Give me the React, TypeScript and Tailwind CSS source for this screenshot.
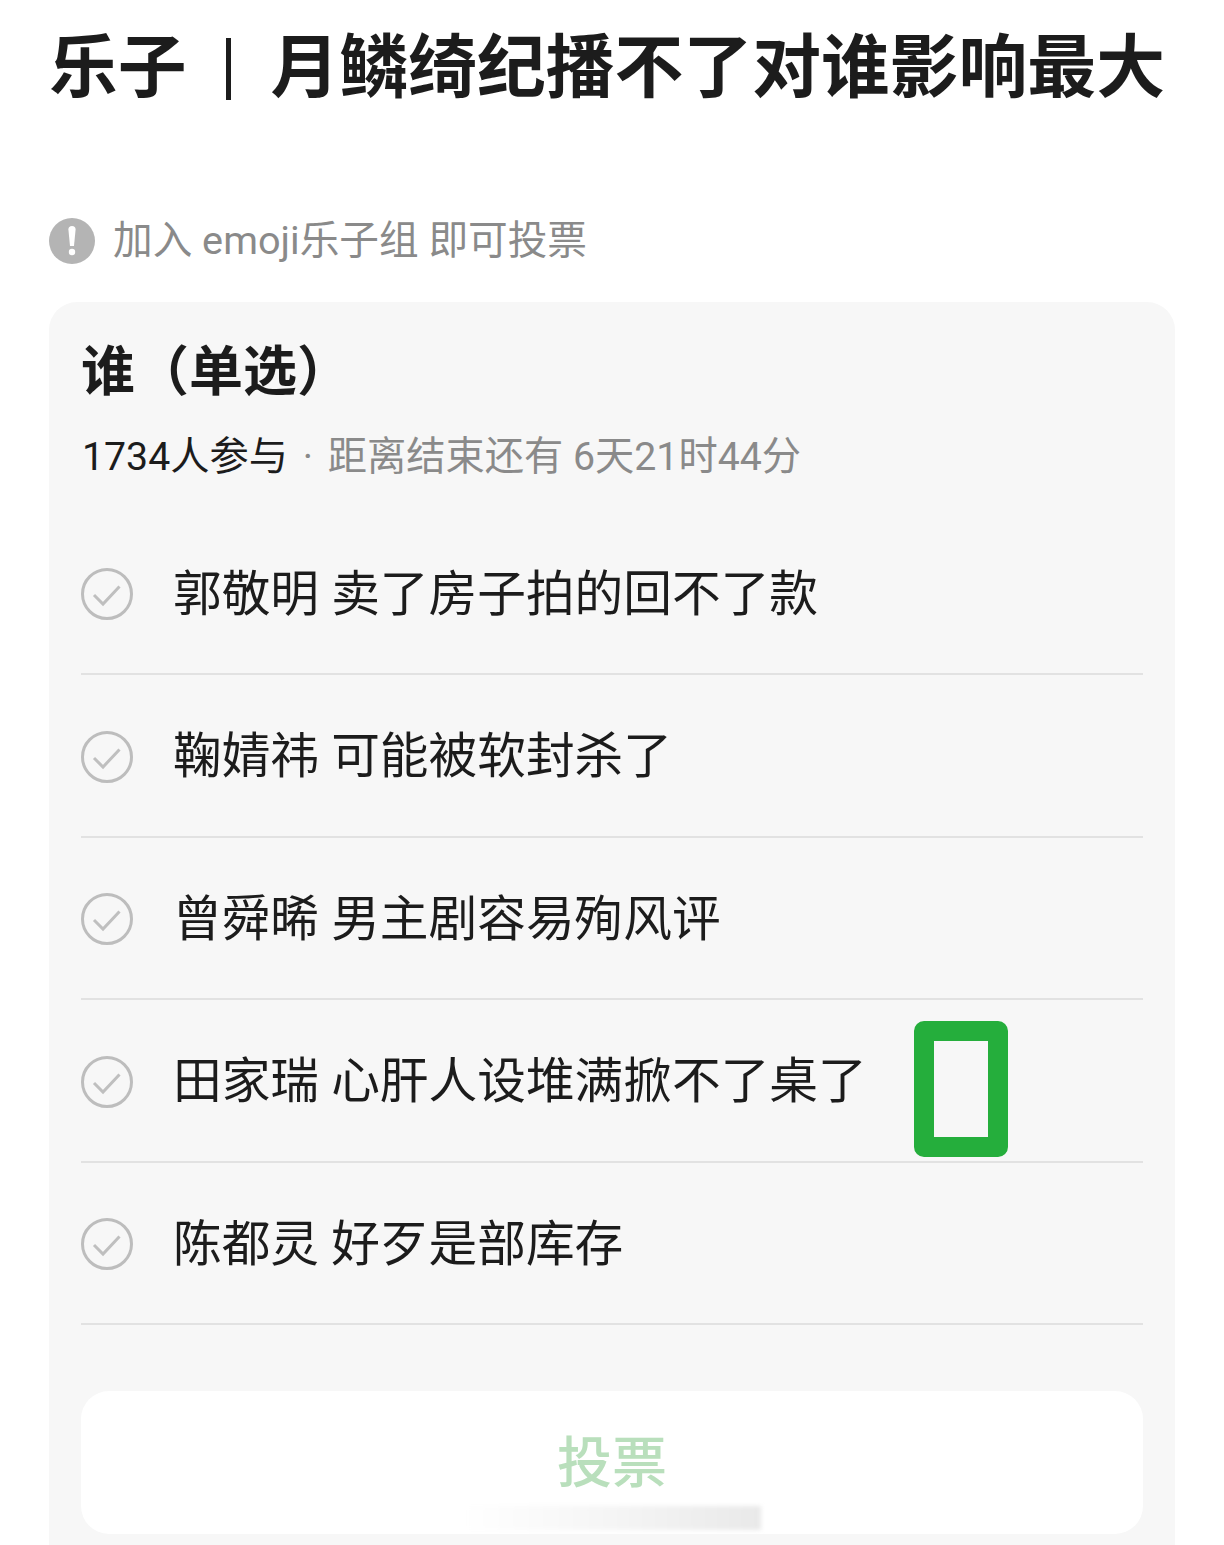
const options = [
  '郭敬明 卖了房子拍的回不了款',
  '鞠婧祎 可能被软封杀了',
  '曾舜晞 男主剧容易殉风评',
  '田家瑞 心肝人设堆满掀不了桌了',
  '陈都灵 好歹是部库存',
]

function CheckCircle() {
  return (
    <svg width="52" height="52" viewBox="0 0 52 52" fill="none" className="shrink-0">
      <circle cx="26" cy="26" r="24.5" stroke="#bdbdbd" strokeWidth="3" />
      <path d="M13 27l9 9 16.5-17.5" stroke="#bfbfbf" strokeWidth="3" />
    </svg>
  )
}

export default function App() {
  return (
    <div className="relative h-[1545px] w-[1224px] overflow-hidden bg-white font-['Roboto','Noto_Sans_CJK_SC',sans-serif]">
      <h1 className="flex h-[134px] items-center pt-[4px] pl-[49px] text-[68.8px] leading-none font-bold whitespace-nowrap text-[#1c1c1c]">
        <span>乐子</span>
        <span className="mr-[40px] ml-[39px] h-[62px] w-[5px] bg-[#1c1c1c]" />
        <span>月鳞绮纪播不了对谁影响最大</span>
      </h1>

      <div className="mt-[82px] flex h-[50px] items-center pl-[49px]">
        <svg width="46" height="46" viewBox="0 0 46 46" className="shrink-0">
          <circle cx="23" cy="23" r="23" fill="#b4b4b4" />
          <path d="M19.4 11.5a3.6 3.6 0 0 1 7.2 0L25 28h-4z" fill="#fff" />
          <circle cx="23" cy="34" r="3.2" fill="#fff" />
        </svg>
        <span className="ml-[18px] text-[39.65px] leading-none text-[#8a8a8a]">加入 emoji乐子组 即可投票</span>
      </div>

      <div className="mx-[49px] mt-[36px] rounded-t-[28px] bg-[#f7f7f7] px-[32px] pt-[38px] pb-[40px]">
        <h2 className="text-[54px] leading-[66px] font-bold text-[#1c1c1c]">谁（单选）</h2>
        <p className="mt-[25px] pl-[1px] text-[39.25px] leading-[52px] whitespace-nowrap text-[#8a8a8a]">
          <span className="text-[#1c1c1c]">1734人参与</span>
          <span className="mx-[5px]"> · </span>距离结束还有 6天21时44分
        </p>

        <ul className="mt-[29.5px]">
          {options.map((o) => (
            <li key={o} className="flex h-[162.5px] items-center gap-[40px] border-b-2 border-[#e2e2e2] pt-[3px]">
              <CheckCircle />
              <span className="pt-[2px] text-[48.7px] leading-none text-[#1c1c1c]">{o}</span>
            </li>
          ))}
        </ul>

        <button className="mt-[65.5px] flex h-[143px] w-full items-center justify-center rounded-[28px] bg-white pt-[2px] text-[55px] font-medium text-[#b9dfbc]">
          投票
        </button>
      </div>

      {/* green tofu box stuck over the list */}
      <div className="absolute top-[1021px] left-[914px] h-[136px] w-[94px] rounded-[10px] border-[20px] border-[#25ae3c]" />
      {/* smudged watermark */}
      <div className="absolute top-[1506px] left-[462px] h-[24px] w-[299px] bg-gradient-to-r from-white via-[#f5f5f5] to-[#e9e9e9] blur-[2px]" />
    </div>
  )
}
